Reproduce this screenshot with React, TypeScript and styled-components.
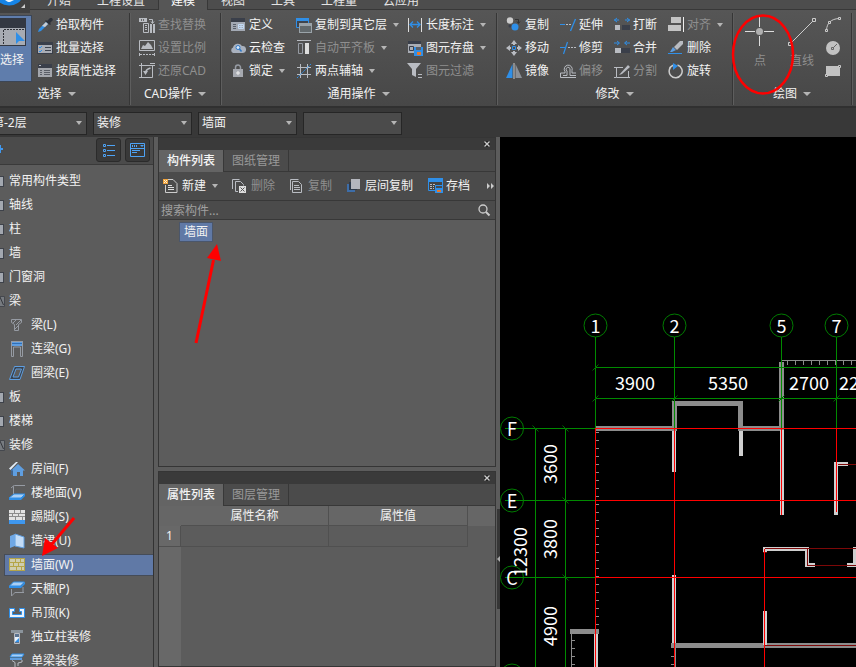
import React, { ReactNode } from 'react';
import styled, { createGlobalStyle, css } from 'styled-components';

const GlobalStyle = createGlobalStyle`
  * { box-sizing: border-box; }
  html, body, #root { height: 100%; }
  body {
    margin: 0;
    overflow: hidden;
    background: #5c5c5c;
    color: #f2f2f2;
    font: 12px/16px "Noto Sans", "Noto Sans CJK SC", sans-serif;
  }
  button, input, select { font: inherit; color: inherit; }
  button { padding: 0; border: 0; background: none; white-space: nowrap; }
  svg { display: block; flex: none; }
`;

/* ---------- icons ---------- */

const B = '#2f8fe8';
const L = '#5f9ee0';
const G = '#b9bcc2';
const D = '#3a3f4a';
const M = '#969ba3';

const glyphs: Record<string, ReactNode> = {
  picker: (
    <>
      <path d="M1 15l1-3 7-7 2 2-7 7z" fill={B} />
      <path d="M5 9l4-4 2 2-3 3z" fill="#c8ccd2" />
      <path d="M8 4l1-1 1 1 3-3 2 0 1 2-3 3 1 1-1 1z" fill="#2c313a" />
    </>
  ),
  batch: (
    <>
      <path d="M0 2h16v12H0z" fill={D} />
      <path d="M1 5h14v8H1z" fill="#a9adb5" />
      <path d="M2 7l1 1 2-2M2 11l1 1 2-2" stroke={B} fill="none" />
      <path d="M8 7.500h6M8 10.500h6" stroke="#3f4550" />
    </>
  ),
  attrs: (
    <>
      <path d="M1 1h14v4H1z" fill={D} />
      <path d="M1 5h14v9H1z" fill="#a3a6ac" />
      <path d="M3 7.500h2M7 7.500h6M3 9.500h2M7 9.500h6M3 11.500h2M7 11.500h6" stroke="#5a5e66" />
      <path d="M2 2h2v1H2z" fill={G} />
    </>
  ),
  find: (
    <>
      <path d="M0 1h8v4H0z" fill={G} />
      <path d="M2.500 2v2M4.500 2v2" stroke="#666" />
      <path d="M10 2.500h3.500V6M12 4.500l1.500 2 1.500-2" stroke={G} fill="none" />
      <path d="M4.500 6.500h5v9h-5z" stroke={G} fill="none" />
      <path d="M6 8.500h2M6 10.500h2M6 12.500h2" stroke={G} />
      <path d="M11 7h2v9h-2zM14 7h2v9h-2z" fill={G} />
    </>
  ),
  scale: (
    <>
      <path d="M.5.500h15v10H.5z" fill="none" stroke={G} />
      <path d="M2 9l2-4 2 1 3-4 3 3 2 4z" fill={G} />
      <path d="M1 14.500h15" stroke={G} strokeDasharray="2 1" />
      <path d="M.5 13v3M15.500 13v3" stroke={G} />
    </>
  ),
  restore: (
    <>
      <path d="M2.500 0v14M0 2.500h16M13.500 2v12.500H0M11 .5h5" fill="none" stroke={G} />
      <path d="M4 8l5 0-2.500 4z" fill={G} />
      <path d="M6.500 10c0-3 2-4 5-5" fill="none" stroke={G} strokeWidth="1.500" />
    </>
  ),
  define: (
    <>
      <path d="M1 1h14v4H1z" fill={D} />
      <path d="M1 5h14v9H1z" fill="#a3a9b4" />
      <path d="M3 7.500h3M3 9.500h3M3 11.500h3" stroke="#59606c" />
      <path d="M8.500 7.500h5v4h-5zM8 9.500h6M11 7v4" fill="none" stroke="#c2daf5" />
    </>
  ),
  cloud: (
    <>
      <path d="M3 13a3 3 0 0 1 0-5.500A5 5 0 0 1 12 6a3.500 3.500 0 0 1 1 7z" fill="#a9b1be" />
      <circle cx="8" cy="7.500" r="2" fill="#d8e8fa" stroke="#2f79c8" />
      <path d="M9.500 9l2 2.500" stroke="#2f79c8" strokeWidth="1.500" />
    </>
  ),
  lock: (
    <>
      <path d="M5.500 7V4.500a2.500 2.500 0 0 1 5 0V7" fill="none" stroke={M} strokeWidth="1.500" />
      <path d="M3 6h10v8H3z" fill="#a6a9b0" />
      <path d="M8 8v4M6 10h4" stroke="#f0f0f0" />
    </>
  ),
  copyFloor: (
    <>
      <path d="M.5 1.500h12v9H.5z" fill="#3f444c" stroke={B} />
      <path d="M0 1h13v3H0z" fill={B} />
      <path d="M3 6h13v10H3z" fill="#9aa3a9" />
      <path d="M4 9h11v6H4z" fill="#62696c" />
    </>
  ),
  leveled: (
    <>
      <path d="M1 .5h14" stroke={G} />
      <path d="M2.500 3.500h4v10h-4z" fill="none" stroke={M} />
      <path d="M9 3h4v11H9z" fill="#ddd" />
    </>
  ),
  axis: (
    <>
      <path d="M4.500 1v14M11.500 1v14M1 4.500h14M1 11.500h14" stroke={G} />
      <path d="M1 15L15 1" stroke={B} strokeDasharray="2 1" />
    </>
  ),
  length: (
    <>
      <path d="M1.500 1v14M14.500 1v14" stroke="#ddd" />
      <path d="M3 7.500h10M6 4.500l-3 3 3 3M10 4.500l3 3-3 3" fill="none" stroke={B} strokeWidth="1.300" />
    </>
  ),
  saveDisk: (
    <>
      <path d="M1 1h13v12H1z" fill="#a9adb5" />
      <path d="M1 1h13v3H1z" fill={D} />
      <path d="M2.500 6.500h4v4h-4z" fill="none" stroke={D} />
      <path d="M7 7h9v9H7z" fill={B} />
      <path d="M9 7h5v3H9z" fill="#59606c" />
      <path d="M10 12h4v3h-4z" fill="#e6782a" />
    </>
  ),
  filter: (
    <>
      <path d="M0 0h14L9 6v8l-4-2V6z" fill={G} />
      <path d="M11 11.500h4M11 14.500h4" stroke={G} />
    </>
  ),
  copy: (
    <>
      <circle cx="4" cy="3.500" r="3.200" fill="#ccc" />
      <path d="M9 2.500h3.500V6M11 4.500l1.500 2 1.500-2" fill="none" stroke="#333" />
      <circle cx="4" cy="9" r="1.500" fill={D} />
      <circle cx="9" cy="10" r="3.500" fill={B} />
    </>
  ),
  move: (
    <>
      <path d="M8 0l3 4H5zM8 16l3-4H5zM0 8l4-3v6zM16 8l-4-3v6z" fill={G} />
      <path d="M8 3v2M8 11v2M3 8h2M11 8h2" stroke={G} strokeWidth="2" />
      <path d="M6.500 6.500h3v3h-3z" fill="none" stroke={B} />
    </>
  ),
  mirror: (
    <>
      <path d="M6.500 1v14H0z" fill={B} />
      <path d="M9.500 1v14H16z" fill="#8b9097" />
      <path d="M8 0v16" stroke="#ccc" />
    </>
  ),
  extend: (
    <>
      <path d="M0 7.500h5" stroke={B} />
      <path d="M6 7.500h6" stroke={G} strokeDasharray="2 1" />
      <path d="M15.500 2L10.500 14" stroke={B} strokeWidth="1.300" />
    </>
  ),
  trim: (
    <>
      <path d="M0 7.500h5M7.500 2L3.500 14" stroke={B} strokeWidth="1.200" />
      <path d="M8 7.500h8" stroke={G} strokeDasharray="2 1" />
    </>
  ),
  breakUp: (
    <>
      <path d="M0 3h5M11 3h5M3 1L.5 3 3 5M13 1l2.500 2L13 5" fill="none" stroke={B} />
      <path d="M1 8h5v5H1z" fill={G} />
      <path d="M8 8h8v5H8z" fill={D} />
    </>
  ),
  merge: (
    <>
      <path d="M0 3h5M11 3h5M3 1l2.500 2L3 5M13 1l-2.500 2L13 5" fill="none" stroke={B} />
      <path d="M1 8h6v5H1z" fill={G} />
      <path d="M7 8h9v5H7z" fill={D} />
    </>
  ),
  offset: (
    <>
      <path d="M5 8.500a4 4 0 1 1 7-1v2.500h4M5 8.500V10H.5v4.500H16" fill="none" stroke={G} />
      <path d="M3 12.500h4V8a2 2 0 1 1 3-1v5.500h6" fill="none" stroke={G} />
    </>
  ),
  split: (
    <>
      <path d="M0 4.500h9M2.500 4v10.500h12V8M0 14.500h2M14 14.500h2" fill="none" stroke={G} />
      <path d="M5 12l9-10 2 2-8 7z" fill={G} />
    </>
  ),
  align: (
    <>
      <path d="M3 0h10v6H3zM0 8h13v6H0z" fill="#c4c4c4" />
      <path d="M15.500 0v15" stroke="#eee" />
    </>
  ),
  erase: (
    <>
      <path d="M0 13.500h14" stroke={B} />
      <path d="M2 12l3-5 3 3-4 2z" fill={L} />
      <path d="M6 7l6-6h3v3L9 10z" fill={G} />
    </>
  ),
  rotate: (
    <>
      <path d="M9.500 2A6.500 6.500 0 1 1 5 2.300" fill="none" stroke="#ccc" strokeWidth="1.500" />
      <path d="M5 0l5 3-5 4z" fill={B} />
    </>
  ),
  arc: (
    <>
      <path d="M1.500 13C2 6 6 2 14 1.500" fill="none" stroke="#ccc" />
      <path d="M.5 12.500h2v2h-2zM3.500 4.500h2v2h-2zM13.500.5h2v2h-2z" fill="#555" stroke="#ccc" />
    </>
  ),
  circle: (
    <>
      <circle cx="8" cy="8" r="7" fill="#c2c2c2" />
      <path d="M8 8l4-4" stroke="#666" />
      <path d="M6.500 7.500h2v2h-2z" fill="#c2c2c2" stroke="#666" />
    </>
  ),
  rect: (
    <>
      <path d="M1 3h14v10H1z" fill="#c2c2c2" />
      <path d="M.5 11.500h2v2h-2zM13.500 2.500h2v2h-2z" fill="#555" stroke="#ccc" />
    </>
  ),
  beam: (
    <>
      <path d="M2.500 2.500h10v3l-3 2v6h-4v-6l-3-2z" fill="none" stroke={M} />
      <path d="M4 6l4-4M7 8l5-5M6 12l3-3" stroke={M} />
    </>
  ),
  linkBeam: (
    <>
      <path d="M2 0h12v5H2z" fill={L} />
      <path d="M2.500 15.500V.5h11v15h-2V6h-7v9.500z" fill="none" stroke={M} />
      <path d="M3 2.500h10" stroke="#316fb5" />
    </>
  ),
  ringBeam: (
    <>
      <path d="M5.500 1.500h10l-4.500 13H.5z" fill="#39424e" stroke={L} />
      <path d="M7 4h5.500l-3 8H4z" fill="#5c5c5c" stroke={L} />
    </>
  ),
  room: (
    <>
      <path d="M9 3l7 6.500h-2V15h-3v-4H8v4H4V9.500H2z" fill={L} />
      <path d="M0 7.500l7-6.500h2L1.500 9z" fill="#e4effa" />
      <path d="M3 8v6" stroke="#2f6fb8" />
    </>
  ),
  floor: (
    <>
      <path d="M4.500 9V1.500L5.500.5H16M2 3l3-2.500" fill="none" stroke={M} />
      <path d="M5 9h11l-4 4H0z" fill="#a9cff5" stroke={B} />
      <path d="M0 13h12l4-4v2l-4 4H0z" fill={B} />
    </>
  ),
  skirting: (
    <>
      <path d="M0 1h16v10H0z" fill="#e3e3e3" />
      <path d="M0 4.500h16M0 7.500h16M5.500 1v3M11.500 1v3M3.500 5v3M9.500 5v3M6.500 8v3M13.500 8v3" stroke="#8d8d8d" />
      <path d="M0 11h16v4H0z" fill="#3f97ee" />
    </>
  ),
  dado: (
    <>
      <path d="M6 1l9 3v11l-9-2z" fill="#c3dcf7" stroke={L} />
      <path d="M1 3l5-2v12l-5 2z" fill="#6fa8e6" />
    </>
  ),
  wallFace: (
    <>
      <path d="M0 1h16v13H0z" fill="#cfcdb0" />
      <path
        d="M0 1.500h16M0 5.500h16M0 9.500h16M0 13.500h16M.5 1v13M15.500 1v13M6.500 2v3M11.500 2v3M4.500 6v3M9.500 6v3M7.500 10v3M12.500 10v3"
        stroke="#b5a548"
      />
    </>
  ),
  ceiling: (
    <>
      <path d="M4.500 1h11l-4 4H.5z" fill="#a9cff5" stroke={B} />
      <path d="M0 5h12l4-4v2l-4 4H0z" fill={B} />
      <path d="M2.500 8v7l4-4M6 11.500h9M14 6v5" fill="none" stroke={M} />
    </>
  ),
  suspended: (
    <>
      <path d="M.5 3.500h5v3h-2v3h9v-3h-2v-3h5v9H.5z" fill="#eaf3fd" stroke={B} />
    </>
  ),
  column: (
    <>
      <path d="M2 1h12v3H2z" fill="#8b949c" />
      <path d="M5.500 4.500h5v10h-5z" fill="#5b7390" stroke={G} />
      <path d="M6 8h4v5H6z" fill="#e8f2fd" />
      <path d="M6 13l4-4v4z" fill={B} />
    </>
  ),
  singleBeam: (
    <>
      <path d="M3 1h12l-2 3H1z" fill="#a9cff5" stroke={B} />
      <path d="M1 5h12v2H1z" fill={L} />
      <path d="M3 7.500l3 2v6h3M13 7v2l-4 1v3" fill="none" stroke={G} />
    </>
  ),
  create: (
    <>
      <path d="M5 1.500h5l4 4v9H2.500V7" fill="none" stroke="#ccc" />
      <path d="M5 7.500h4M5 9.500h6M5 11.500h6" stroke="#ddd" />
      <path d="M0 1h5v5H0z" fill="#f0a33c" />
      <path d="M1 2h1v1H1zM3 2h1v1H3zM2 3h1v1H2zM1 4h1v1H1zM3 4h1v1H3z" fill="#fff3d8" />
    </>
  ),
  remove: (
    <>
      <path d="M.5 11V1.500h7M3.500 13.500v-10h5l3 3v1M3.500 13.500H6" fill="none" stroke={G} />
      <path d="M7 8h7v7H7z" fill="#ddd" />
      <path d="M8.500 9.500l4 4M12.500 9.500l-4 4" stroke="#555" />
    </>
  ),
  pages: (
    <>
      <path d="M1.500 12V1.500h8M3.500 3.500h6l3 3v8h-9z" fill="none" stroke={G} />
      <path d="M5 7.500h5M5 9.500h6M5 11.500h6" stroke={G} />
    </>
  ),
  layers: (
    <>
      <path d="M1 6h8v8H1z" fill="#3d6da8" />
      <path d="M3 4h8v8H3z" fill="#2e3a4a" />
      <path d="M5 1h9v10H5z" fill="#b4b6bd" />
    </>
  ),
  archive: (
    <>
      <path d="M1.500 1.500h14v11h-14z" fill="#444" stroke={B} />
      <path d="M1 0h15v4H1z" fill={B} />
      <path d="M3 6.500h5M3 8.500h4M3 10.500h4" stroke={G} strokeDasharray="2 1" />
      <path d="M8 7h8v8H8z" fill={B} />
      <path d="M9 8h6v2H9z" fill="#4a4a4a" />
      <path d="M10 12h4v2h-4z" fill="#e6782a" />
    </>
  ),
  search: (
    <>
      <circle cx="7" cy="7" r="4" fill="none" stroke="#ccc" strokeWidth="1.300" />
      <path d="M10 10l3.500 3.500" stroke="#ccc" strokeWidth="2" />
    </>
  ),
  listView: (
    <>
      <path d="M2.500 2.500h2v2h-2zM2.500 7.500h2v2h-2zM2.500 12.500h2v2h-2z" fill="none" stroke="#4ea3f5" />
      <path d="M6 3.500h8M6 8.500h8M6 13.500h8" stroke="#4ea3f5" />
    </>
  ),
  windowView: (
    <>
      <path d="M.5 1.500h14v13H.5zM1 6.500h14M2 8.500h8M2 10.500h5" fill="none" stroke="#4ea3f5" />
      <path d="M2 3h1v2H2zM4 3h1v2H4zM6 3h1v2H6zM10 3h4l-2 2z" fill="#4ea3f5" />
    </>
  ),
};

const Icon = ({ name }: { name: string }) => (
  <svg width="16" height="16" viewBox="0 0 16 16" aria-hidden="true">
    {glyphs[name]}
  </svg>
);

const Caret = ({ size = 6 }: { size?: number }) => (
  <svg width={size} height="4" viewBox="0 0 6 4" preserveAspectRatio="none" aria-hidden="true">
    <path d="M0 0h6L3 4z" fill="#b5b5b5" />
  </svg>
);

/* ---------- shell ---------- */

const Shell = styled.div`
  position: relative;
  display: flex;
  flex-direction: column;
  height: 100vh;
  overflow: hidden;
`;

const TabStrip = styled.nav`
  display: flex;
  align-items: flex-end;
  gap: 2px;
  height: 10px;
  padding-left: 35px;
  overflow: hidden;
  flex: none;
  background: #4d4d4d;
  box-shadow: inset 0 -1px #383838;
`;

const RibbonTab = styled.button<{ $active?: boolean }>`
  flex: none;
  padding: 0 12px 1px;
  color: #e4e4e4;
  ${({ $active }) =>
    $active &&
    css`
      background: #565656;
      color: #fff;
      box-shadow: -1px 0 #383838, 1px 0 #383838;
    `}
`;

const AppButton = styled.button`
  position: absolute;
  left: 0;
  top: 0;
  width: 30px;
  height: 13px;
  background: #404040;
`;

const Ribbon = styled.div`
  display: flex;
  flex: none;
  height: 98px;
  padding: 3px 0 0;
  margin-left: -16px;
  background: linear-gradient(#565656, #474747);
  border-bottom: 2px solid #303030;
`;

const Group = styled.section<{ $width: number }>`
  display: flex;
  flex-direction: column;
  flex: none;
  width: ${({ $width }) => $width}px;
  height: 92px;
  border-right: 1px solid #363636;
  box-shadow: 1px 0 #5e5e5e;
`;

const GroupBody = styled.div<{ $inset?: number }>`
  display: flex;
  height: 70px;
  padding-left: ${({ $inset = 8 }) => $inset}px;
`;

const GroupLabel = styled.button`
  display: flex;
  align-items: center;
  justify-content: center;
  gap: 6px;
  height: 24px;
  flex: none;
`;

const Column = styled.div<{ $width?: number }>`
  display: flex;
  flex-direction: column;
  flex: none;
  width: ${({ $width }) => ($width ? `${$width}px` : 'auto')};
`;

const Tool = styled.button`
  display: flex;
  align-items: center;
  gap: 3px;
  height: 23px;
  &:disabled { color: #8f8f8f; }
  span + svg { margin-left: 3px; }
`;

const BigTool = styled.button<{ $active?: boolean; $width: number }>`
  display: flex;
  flex-direction: column;
  align-items: center;
  gap: 6px;
  flex: none;
  width: ${({ $width }) => $width}px;
  height: 67px;
  margin-top: 2px;
  padding-top: 2px;
  &:disabled { color: #8f8f8f; }
  ${({ $active }) =>
    $active &&
    css`
      background: #5f7dac;
      border: 1px solid #3c4656;
    `}
`;

/* ---------- selector bar ---------- */

const SelectorBar = styled.div`
  display: flex;
  align-items: center;
  gap: 6px;
  height: 29px;
  padding-top: 1px;
  margin-left: -12px;
  flex: none;
  background: #383838;
`;

const Picker = styled.label`
  display: grid;
  align-items: center;
  width: 99px;
  height: 23px;
  border: 1px solid #262626;
  background: #4b4b4b;
  select, svg { grid-area: 1 / 1; }
  svg { justify-self: end; margin-right: 4px; pointer-events: none; }
  select {
    appearance: none;
    width: 100%;
    height: 21px;
    padding: 0 3px;
    border: 0;
    background: none;
  }
`;

/* ---------- workspace ---------- */

const Workspace = styled.div`
  display: flex;
  flex: 1;
  min-height: 0;
`;

const Sidebar = styled.aside`
  flex: none;
  width: 154px;
  overflow: hidden;
  background: #5c5c5c;
  border-right: 1px solid #333;
`;

const SidebarHead = styled.header`
  display: flex;
  gap: 4px;
  height: 28px;
  padding-top: 1px;
  background: #4b4b4b;
  border-bottom: 1px solid #3a3a3a;
`;

const AddButton = styled.button`
  width: 92px;
  height: 22px;
`;

const ViewButton = styled.button`
  display: grid;
  place-items: center;
  width: 25px;
  height: 24px;
  border: 1px solid #2b2b2b;
  border-radius: 3px;
  background: #393939;
`;

const Tree = styled.ul`
  margin: 0;
  padding: 4px 0 0;
  list-style: none;
  li {
    display: flex;
    align-items: center;
    height: 24px;
  }
`;

const Branch = styled.button`
  display: flex;
  align-items: center;
  gap: 4px;
  width: 100%;
  height: 20px;
`;

const Leaf = styled.button<{ $active?: boolean }>`
  display: flex;
  align-items: center;
  gap: 6px;
  flex: 1;
  height: 20px;
  margin-left: 5px;
  padding-left: 4px;
  ${({ $active }) =>
    $active &&
    css`
      background: #6079a6;
      box-shadow: 0 0 0 1px #454c58;
    `}
`;

const Docks = styled.div`
  display: flex;
  flex-direction: column;
  gap: 4px;
  flex: none;
  width: 338px;
  margin-left: 4px;
`;

const Dock = styled.section<{ $grow: number }>`
  display: flex;
  flex-direction: column;
  flex: ${({ $grow }) => $grow} 1 0;
  min-height: 0;
  overflow: hidden;
  border: 1px solid #353535;
  background: #5c5c5c;
`;

const DockTitle = styled.header`
  display: flex;
  justify-content: flex-end;
  align-items: center;
  height: 12px;
  padding-right: 4px;
  flex: none;
  background: #3a3a3a;
`;

const DockTabs = styled.div`
  display: flex;
  height: 22px;
  flex: none;
  background: #4b4b4b;
  box-shadow: inset 0 -1px #383838;
`;

const DockTab = styled.button<{ $active?: boolean }>`
  padding: 0 8px;
  border-right: 1px solid #383838;
  color: #999;
  ${({ $active }) =>
    $active &&
    css`
      background: #646464;
      color: #f4f4f4;
      font-weight: 500;
    `}
`;

const DockTools = styled.div`
  display: flex;
  align-items: center;
  gap: 14px;
  height: 29px;
  padding-left: 4px;
  flex: none;
  background: #4b4b4b;
  border-bottom: 1px solid #383838;
`;

const More = styled.button`
  margin-left: auto;
`;

const SearchRow = styled.label`
  display: flex;
  align-items: center;
  height: 19px;
  padding: 0 3px 0 2px;
  flex: none;
  background: #4b4b4b;
  border-bottom: 1px solid #383838;
  input {
    flex: 1;
    min-width: 0;
    height: 18px;
    padding: 0;
    border: 0;
    outline: 0;
    background: none;
  }
  input::placeholder { color: #a0a0a0; }
`;

const ItemList = styled.ul`
  flex: 1;
  margin: 0;
  padding: 2px 0 0 20px;
  list-style: none;
`;

const Item = styled.button`
  height: 20px;
  padding: 0 4px;
  border: 1px solid #4a566b;
  background: #6079a6;
`;

const Sheet = styled.div`
  flex: 1;
  background: linear-gradient(to right, #686868 22px, #5c5c5c 22px);
`;

const Properties = styled.table`
  width: 100%;
  table-layout: fixed;
  border-collapse: separate;
  border-spacing: 0;
  th, td {
    height: 20px;
    padding: 0;
    font-weight: 400;
    border: 0 solid #505050;
  }
  thead th { background: #666; border-bottom-width: 1px; }
  thead th:first-child, thead th:last-child { border-bottom-width: 0; }
  tbody th, tbody td { height: 21px; border-bottom-width: 1px; }
  tbody td:last-child { border-bottom-width: 0; }
  th:not(:last-child), td:not(:last-child) { border-right-width: 1px; }
  thead th:first-child { border-right-width: 0; }
`;

const Splitter = styled.div`
  display: flex;
  flex-direction: column;
  justify-content: flex-end;
  flex: none;
  width: 4px;
  padding: 0 0 58px 1px;
`;

const SplitterHandle = styled.button`
  display: flex;
  align-items: center;
  width: 3px;
  height: 100px;
  background: #363636;
`;

const Canvas = styled.main`
  flex: 1;
  min-width: 0;
  background: #000;
  overflow: hidden;
  svg { width: 100%; height: 100%; }
  text {
    font: 18px "Noto Sans CJK SC", sans-serif;
    fill: #fff;
    text-anchor: middle;
  }
`;

const Markup = styled.svg`
  position: absolute;
  left: 0;
  top: 0;
  pointer-events: none;
`;

/* ---------- data ---------- */

type ToolDef = { icon: string; label: string; off?: boolean; menu?: boolean };
type ColumnDef = { width?: number; tools: ToolDef[] };

const t = (icon: string, label: string, flags = ''): ToolDef => ({
  icon,
  label,
  off: flags.includes('off'),
  menu: flags.includes('menu'),
});

const selectTools: ColumnDef[] = [
  { tools: [t('picker', '拾取构件'), t('batch', '批量选择'), t('attrs', '按属性选择')] },
];
const cadTools: ColumnDef[] = [
  { tools: [t('find', '查找替换', 'off'), t('scale', '设置比例', 'off'), t('restore', '还原CAD', 'off')] },
];
const commonTools: ColumnDef[] = [
  { width: 66, tools: [t('define', '定义'), t('cloud', '云检查'), t('lock', '锁定', 'menu')] },
  { width: 111, tools: [t('copyFloor', '复制到其它层', 'menu'), t('leveled', '自动平齐板', 'off menu'), t('axis', '两点辅轴', 'menu')] },
  { tools: [t('length', '长度标注', 'menu'), t('saveDisk', '图元存盘', 'menu'), t('filter', '图元过滤', 'off')] },
];
const editTools: ColumnDef[] = [
  { width: 54, tools: [t('copy', '复制'), t('move', '移动'), t('mirror', '镜像')] },
  { width: 54, tools: [t('extend', '延伸'), t('trim', '修剪'), t('offset', '偏移', 'off')] },
  { width: 54, tools: [t('breakUp', '打断'), t('merge', '合并'), t('split', '分割', 'off')] },
  { tools: [t('align', '对齐', 'off menu'), t('erase', '删除'), t('rotate', '旋转')] },
];

const Columns = ({ columns }: { columns: ColumnDef[] }) => (
  <>
    {columns.map((column, i) => (
      <Column key={i} $width={column.width}>
        {column.tools.map((tool) => (
          <Tool key={tool.label} disabled={tool.off}>
            <Icon name={tool.icon} />
            <span>{tool.label}</span>
            {tool.menu && <Caret />}
          </Tool>
        ))}
      </Column>
    ))}
  </>
);

const RibbonGroup = ({ label, width, inset, children }: { label: string; width: number; inset?: number; children: ReactNode }) => (
  <Group $width={width}>
    <GroupBody $inset={inset}>{children}</GroupBody>
    <GroupLabel>
      {label}
      <Caret size={8} />
    </GroupLabel>
  </Group>
);

type TreeNode = { label: string; icon?: string; open?: boolean; active?: boolean };
const nodes: TreeNode[] = [
  { label: '常用构件类型' },
  { label: '轴线' },
  { label: '柱' },
  { label: '墙' },
  { label: '门窗洞' },
  { label: '梁', open: true },
  { label: '梁(L)', icon: 'beam' },
  { label: '连梁(G)', icon: 'linkBeam' },
  { label: '圈梁(E)', icon: 'ringBeam' },
  { label: '板' },
  { label: '楼梯' },
  { label: '装修', open: true },
  { label: '房间(F)', icon: 'room' },
  { label: '楼地面(V)', icon: 'floor' },
  { label: '踢脚(S)', icon: 'skirting' },
  { label: '墙裙(U)', icon: 'dado' },
  { label: '墙面(W)', icon: 'wallFace', active: true },
  { label: '天棚(P)', icon: 'ceiling' },
  { label: '吊顶(K)', icon: 'suspended' },
  { label: '独立柱装修', icon: 'column' },
  { label: '单梁装修', icon: 'singleBeam' },
];

const Toggle = ({ open }: { open?: boolean }) => (
  <svg width="5" height="12" viewBox="0 0 5 12" aria-hidden="true">
    {open ? (
      <>
        <path d="M0 1.500h4.500v10H0" fill="#777b80" stroke="#45484e" />
        <path d="M0 2l3.500 8" stroke="#33363b" />
      </>
    ) : (
      <>
        <path d="M0 1h4v11H0z" fill="#3e424a" />
        <path d="M0 2h3v9H0z" fill="#a3a8b0" />
      </>
    )}
  </svg>
);

const CloseButton = ({ label }: { label: string }) => (
  <button aria-label={label}>
    <svg width="8" height="8" viewBox="0 0 8 8">
      <path d="M1 1h6v6H1z" fill="#222" />
      <path d="M1.500 1.500l5 5M6.500 1.500l-5 5" stroke="#ccc" strokeWidth="1.300" />
    </svg>
  </button>
);

/* ---------- floor plan ---------- */

const range = (from: number, to: number, step: number) =>
  Array.from({ length: Math.floor((to - from) / step) + 1 }, (_, i) => from + i * step);

const topAxes = [
  { name: '1', x: 595.5 },
  { name: '2', x: 674.5 },
  { name: '5', x: 781.5 },
  { name: '7', x: 836.5 },
];
const sideAxes = [
  { name: 'F', y: 428.5 },
  { name: 'E', y: 500.5 },
  { name: 'C', y: 577.5 },
];

const Bubble = ({ x, y, name }: { x: number; y: number; name?: string }) => (
  <>
    <circle cx={x} cy={y} r="11.500" fill="none" stroke="#007c00" />
    {name && <text x={x} y={y + 7}>{name}</text>}
  </>
);

const FloorPlan = () => (
  <svg viewBox="500 137 356 530" preserveAspectRatio="xMinYMin slice" role="img" aria-label="平面图">
    <g shapeRendering="crispEdges" fill="none">
      <path
        stroke="#8c8c8c"
        strokeWidth="5"
        d="M595 428.500H677M674.500 401V431M672 403.500H743M740.500 401V431M738 428.500H782M781.500 362V430M671 645.500H870M570 631.500H599"
      />
      <path
        stroke="#8c8c8c"
        d={
          'M782 360.500H870M571.500 634V700M675.500 648V700' +
          range(787.5, 860, 8).map((x) => `M${x} 361V365`).join('') +
          range(432.5, 626, 8).map((y) => `M596 ${y}H599`).join('') +
          range(640.5, 700, 8).map((y) => `M571 ${y}H575`).join('') +
          range(656.5, 700, 8).map((y) => `M671 ${y}H675`).join('')
        }
      />
      <path
        stroke="#cfcfcf"
        strokeWidth="4"
        d="M674 431V472M741 431V456M782 430V515M836 462V515M834 464H848M763 549H809M765 547V552M807 547V567M805 565H815M847 565H856M855 547V567M765 611V645M674 575V643M596 634V700"
      />
      <path stroke="#7d0808" d="M838 464.500H870M765 548.500H870M807.500 549V566M807 565.500H870M765 645.500H870M763 552.500H767" />
      <path
        stroke="#008a00"
        d="M595 367.500H870M595 398.500H870M535.500 428V700M565.500 428V700M595.500 337V428M674.500 337V428M781.500 337V428M836.500 337V428M505 428.500H595M505 500.500H595M505 577.500H595"
      />
      <path
        stroke="#ff0000"
        d="M595.500 428V700M674.500 428V700M781.500 428V515M836.500 428V512M764.500 549V700M595 428.500H870M595 500.500H870M595 577.500H870"
      />
    </g>
    <path
      stroke="#006a00"
      d={
        topAxes.map(({ x }) => `M${x - 3} 401.500l6-6`).join('') +
        'M592.500 370.500l6-6M532.500 425.500l6 6' +
        sideAxes.map(({ y }) => `M562.500 ${y - 3}l6 6`).join('')
      }
    />
    {topAxes.map((a) => <Bubble key={a.name} x={a.x} y={325.5} name={a.name} />)}
    {sideAxes.map((a) => <Bubble key={a.name} x={512} y={a.y} name={a.name} />)}
    <Bubble x={512} y={675.5} />
    <text x="635" y="390">3900</text>
    <text x="728" y="390">5350</text>
    <text x="809" y="390">2700</text>
    <text x="859" y="390">2250</text>
    <text transform="translate(557 464) rotate(-90)">3600</text>
    <text transform="translate(557 539) rotate(-90)">3800</text>
    <text transform="translate(557 626) rotate(-90)">4900</text>
    <text transform="translate(527 552) rotate(-90)">12300</text>
  </svg>
);

const ribbonTabs = ['开始', '工程设置', '建模', '视图', '工具', '工程量', '云应用'];
const pickers = [
  { label: '楼层', value: '第-2层' },
  { label: '类别', value: '装修' },
  { label: '构件类型', value: '墙面' },
  { label: '构件', value: '' },
];

export default function App() {
  return (
    <Shell>
      <GlobalStyle />
      <TabStrip>
        {ribbonTabs.map((tab) => (
          <RibbonTab key={tab} $active={tab === '建模'}>{tab}</RibbonTab>
        ))}
      </TabStrip>
      <Ribbon>
        <RibbonGroup label="选择" width={146}>
          <BigTool $active $width={40}>
            <svg width="28" height="28" viewBox="0 0 28 28" aria-hidden="true">
              <path d="M0 0h28v28H0z" fill="#333842" />
              <path d="M1 10h26v17H1z" fill="#a7abb3" />
              <path d="M26 11.500H5.500V27" fill="none" stroke="#2e3138" strokeDasharray="2 1" />
              <path d="M18 14v12l3-3h6z" fill={B} />
            </svg>
            选择
          </BigTool>
          <Column $width={5} />
          <Columns columns={selectTools} />
        </RibbonGroup>
        <RibbonGroup label="CAD操作" width={91} inset={9}>
          <Columns columns={cadTools} />
        </RibbonGroup>
        <RibbonGroup label="通用操作" width={276} inset={9}>
          <Columns columns={commonTools} />
        </RibbonGroup>
        <RibbonGroup label="修改" width={236} inset={9}>
          <Columns columns={editTools} />
        </RibbonGroup>
        <RibbonGroup label="绘图" width={119}>
          <BigTool disabled $width={38}>
            <svg width="30" height="30" viewBox="0 0 30 30" aria-hidden="true">
              <path d="M14.500 0v10M14.500 19v10M0 14.500h10M19 14.500h10" stroke="#ddd" />
              <circle cx="14.500" cy="14.500" r="3.500" fill="#b0b0b0" />
            </svg>
            点
          </BigTool>
          <BigTool disabled $width={46}>
            <svg width="30" height="30" viewBox="0 0 30 30" aria-hidden="true">
              <path d="M3 27L27 3" stroke="#ccc" />
              <path d="M1.500 25.500h3v3h-3zM25.500 1.500h3v3h-3z" fill="#555" stroke="#ccc" />
            </svg>
            直线
          </BigTool>
          <Column>
            <Tool aria-label="弧"><Icon name="arc" /></Tool>
            <Tool aria-label="圆"><Icon name="circle" /></Tool>
            <Tool aria-label="矩形"><Icon name="rect" /></Tool>
          </Column>
        </RibbonGroup>
      </Ribbon>
      <SelectorBar>
        {pickers.map((p) => (
          <Picker key={p.label}>
            <select aria-label={p.label} defaultValue={p.value}>
              <option>{p.value}</option>
            </select>
            <Caret />
          </Picker>
        ))}
      </SelectorBar>
      <Workspace>
        <Sidebar>
          <SidebarHead>
            <AddButton aria-label="添加">
              <svg width="4" height="8" viewBox="0 0 4 8">
                <path d="M0 0h1v3h2v2H1v3H0z" fill="#3f97ee" />
              </svg>
            </AddButton>
            <ViewButton aria-label="列表视图"><Icon name="listView" /></ViewButton>
            <ViewButton aria-label="窗口视图"><Icon name="windowView" /></ViewButton>
          </SidebarHead>
          <Tree>
            {nodes.map((node) => (
              <li key={node.label}>
                {node.icon ? (
                  <Leaf $active={node.active}>
                    <Icon name={node.icon} />
                    {node.label}
                  </Leaf>
                ) : (
                  <Branch>
                    <Toggle open={node.open} />
                    {node.label}
                  </Branch>
                )}
              </li>
            ))}
          </Tree>
        </Sidebar>
        <Docks>
          <Dock $grow={331}>
            <DockTitle><CloseButton label="关闭构件列表" /></DockTitle>
            <DockTabs>
              <DockTab $active>构件列表</DockTab>
              <DockTab>图纸管理</DockTab>
            </DockTabs>
            <DockTools>
              <Tool><Icon name="create" /><span>新建</span><Caret /></Tool>
              <Tool disabled><Icon name="remove" /><span>删除</span></Tool>
              <Tool disabled><Icon name="pages" /><span>复制</span></Tool>
              <Tool><Icon name="layers" /><span>层间复制</span></Tool>
              <Tool><Icon name="archive" /><span>存档</span></Tool>
              <More aria-label="更多">
                <svg width="9" height="6" viewBox="0 0 9 6">
                  <path d="M1 0l3 3-3 3zM5 0l3 3-3 3z" fill="#ccc" />
                </svg>
              </More>
            </DockTools>
            <SearchRow>
              <input placeholder="搜索构件..." aria-label="搜索构件" />
              <Icon name="search" />
            </SearchRow>
            <ItemList>
              <li><Item>墙面</Item></li>
            </ItemList>
          </Dock>
          <Dock $grow={195}>
            <DockTitle><CloseButton label="关闭属性列表" /></DockTitle>
            <DockTabs>
              <DockTab $active>属性列表</DockTab>
              <DockTab>图层管理</DockTab>
            </DockTabs>
            <Sheet>
              <Properties>
                <colgroup>
                  <col width="22" />
                  <col width="148" />
                  <col width="139" />
                  <col />
                </colgroup>
                <thead>
                  <tr><th /><th>属性名称</th><th>属性值</th><th /></tr>
                </thead>
                <tbody>
                  <tr><th scope="row">1</th><td /><td /><td /></tr>
                </tbody>
              </Properties>
            </Sheet>
          </Dock>
        </Docks>
        <Splitter>
          <SplitterHandle aria-label="折叠面板">
            <svg width="3" height="6" viewBox="0 0 3 6"><path d="M3 0v6L0 3z" fill="#aaa" /></svg>
          </SplitterHandle>
        </Splitter>
        <Canvas>
          <FloorPlan />
        </Canvas>
      </Workspace>
      <AppButton aria-label="应用菜单">
        <svg width="30" height="13" viewBox="0 0 30 13">
          <ellipse cx="9" cy="-4" rx="13" ry="9.500" fill="#1684e6" />
          <path d="M5 0h9l-4 2H8z" fill="#e8f3fd" />
          <path d="M25 4v4h-4z" fill="#ccc" />
        </svg>
      </AppButton>
      <Markup width="856" height="667" viewBox="0 0 856 667" aria-hidden="true">
        <ellipse cx="763" cy="54.500" rx="30" ry="39" fill="none" stroke="#ff0000" strokeWidth="2.500" />
        <path d="M196 343L213.500 260" stroke="#ff0000" strokeWidth="3" />
        <path d="M217 244l4 17-14-3z" fill="#ff0000" />
        <path d="M74 518L52 544" stroke="#ff0000" strokeWidth="3" />
        <path d="M42 556l3-18 13 10z" fill="#ff0000" />
      </Markup>
    </Shell>
  );
}
